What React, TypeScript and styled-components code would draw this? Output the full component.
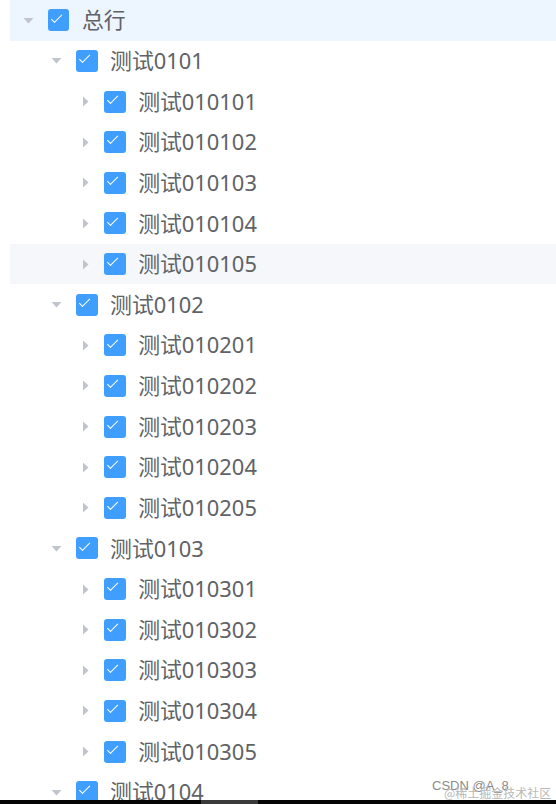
import React from "react";
import styled, { createGlobalStyle } from "styled-components";

const GlobalStyle = createGlobalStyle`
  html, body { margin: 0; padding: 0; background: #ffffff; }
  body { font-family: "Noto Sans", "Noto Sans CJK SC", sans-serif; }
`;

const Page = styled.div`
  width: 556px;
  height: 804px;
  display: flex;
  flex-direction: column;
  position: relative;
  overflow: hidden;
  background: #fff;
`;

const TreeArea = styled.div`
  flex: 1;
  overflow: hidden;
  padding-left: 10px;
`;

const Row = styled.div<{ $level: number; $state?: "current" | "hover" }>`
  height: 40.625px;
  display: flex;
  align-items: center;
  padding-left: ${(p) => p.$level * 28.125}px;
  background: ${(p) =>
    p.$state === "current" ? "#edf5fe" : p.$state === "hover" ? "#f5f7fa" : "transparent"};
`;

const Expander = styled.span<{ $open: boolean }>`
  width: 37.5px;
  height: 37.5px;
  display: flex;
  align-items: center;
  justify-content: center;
  flex: none;
  svg {
    transform: rotate(${(p) => (p.$open ? 90 : 0)}deg);
  }
`;

const Box = styled.span`
  position: relative;
  width: 21.9px;
  height: 21.9px;
  border-radius: 3px;
  background: #409eff;
  flex: none;
  margin-right: 12.5px;
  &::after {
    content: "";
    position: absolute;
    box-sizing: content-box;
    left: 6.6px;
    top: 2.2px;
    width: 4.3px;
    height: 10.2px;
    border: 1.5px solid #fff;
    border-left: 0;
    border-top: 0;
    transform: rotate(45deg);
  }
`;

const Label = styled.span`
  font-size: 21.875px;
  color: #606266;
  white-space: nowrap;
  line-height: 1;
`;

const BottomBar = styled.div`
  height: 4px;
  flex: none;
  background: #050505;
  display: flex;
`;

const BarThumb = styled.div`
  margin-left: 201px;
  width: 57px;
  background: #3a3a3a;
`;

const Watermark = styled.div`
  position: absolute;
  right: 4px;
  bottom: 4px;
  width: 120px;
  height: 22px;
  pointer-events: none;
`;

const WmMain = styled.span`
  position: absolute;
  left: 0;
  top: 0;
  font-family: "Liberation Sans", "Noto Sans CJK SC", sans-serif;
  font-size: 13px;
  color: #8a8a8a;
  white-space: nowrap;
`;

const WmSub = styled.span`
  position: absolute;
  left: 12px;
  top: 6px;
  font-family: "Noto Sans CJK SC", sans-serif;
  font-size: 12px;
  color: #b8b8b8;
  white-space: nowrap;
`;

const Caret = () => (
  <svg width="19" height="19" viewBox="0 0 19 19">
    <polygon points="7,4.5 12.5,9.5 7,14.5" fill="#c0c4cc" />
  </svg>
);

type Node = { label: string; level: number; open: boolean; state?: "current" | "hover" };

const nodes: Node[] = [{ label: "总行", level: 0, open: true, state: "current" }];
["01", "02", "03", "04"].forEach((g) => {
  nodes.push({ label: `测试01${g}`, level: 1, open: true });
  if (g !== "04") {
    ["01", "02", "03", "04", "05"].forEach((c) => {
      nodes.push({
        label: `测试01${g}${c}`,
        level: 2,
        open: false,
        state: g === "01" && c === "05" ? "hover" : undefined,
      });
    });
  }
});

export default function App() {
  return (
    <>
      <GlobalStyle />
      <Page>
        <TreeArea>
          {nodes.map((n) => (
            <Row key={n.label} $level={n.level} $state={n.state}>
              <Expander $open={n.open}>
                <Caret />
              </Expander>
              <Box />
              <Label>{n.label}</Label>
            </Row>
          ))}
        </TreeArea>
        <BottomBar>
          <BarThumb />
        </BottomBar>
        <Watermark>
          <WmMain>CSDN @A_8</WmMain>
          <WmSub>@稀土掘金技术社区</WmSub>
        </Watermark>
      </Page>
    </>
  );
}
